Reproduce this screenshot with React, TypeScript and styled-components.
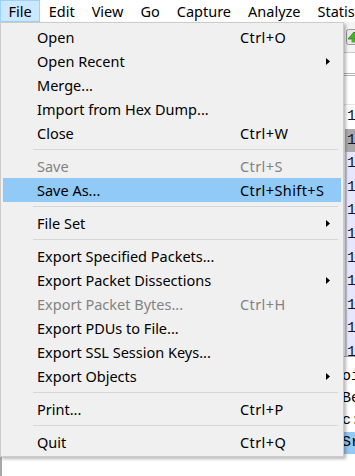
import React from "react";
import styled, { createGlobalStyle } from "styled-components";

type Entry =
    | { kind: "sep" }
    | { kind: "item"; label: string; shortcut?: string; submenu?: boolean; disabled?: boolean; active?: boolean };

const fileMenu: Entry[] = [
    { kind: "item", label: "Open", shortcut: "Ctrl+O" },
    { kind: "item", label: "Open Recent", submenu: true },
    { kind: "item", label: "Merge..." },
    { kind: "item", label: "Import from Hex Dump..." },
    { kind: "item", label: "Close", shortcut: "Ctrl+W" },
    { kind: "sep" },
    { kind: "item", label: "Save", shortcut: "Ctrl+S", disabled: true },
    { kind: "item", label: "Save As...", shortcut: "Ctrl+Shift+S", active: true },
    { kind: "sep" },
    { kind: "item", label: "File Set", submenu: true },
    { kind: "sep" },
    { kind: "item", label: "Export Specified Packets..." },
    { kind: "item", label: "Export Packet Dissections", submenu: true },
    { kind: "item", label: "Export Packet Bytes...", shortcut: "Ctrl+H", disabled: true },
    { kind: "item", label: "Export PDUs to File..." },
    { kind: "item", label: "Export SSL Session Keys..." },
    { kind: "item", label: "Export Objects", submenu: true },
    { kind: "sep" },
    { kind: "item", label: "Print...", shortcut: "Ctrl+P" },
    { kind: "sep" },
    { kind: "item", label: "Quit", shortcut: "Ctrl+Q" },
];

const menuTitles = ["File", "Edit", "View", "Go", "Capture", "Analyze", "Statistics"];

// packet list rows: first plain, second selected-gray, rest coloured
const packetRows = ["plain", "marked", "tcp", "tcp", "tcp", "tcp", "tcp", "tcp", "tcp", "tcp", "tcp"] as const;

const detailLines = [
    { text: "oint", hl: false },
    { text: "Be", hl: false },
    { text: "c: ", hl: false },
    { text: "Sr", hl: true },
];

function Arrow() {
    return (
        <ArrowIcon width="4" height="7" viewBox="0 0 4 7">
            <path d="M0 0 L4 3.5 L0 7 Z" fill="#000" />
        </ArrowIcon>
    );
}

export default function App() {
    return (
        <>
            <GlobalStyle />
            <Window>
                <MenuBar>
                    {menuTitles.map((t, i) => (
                        <MenuTitle key={t} open={i === 0}>
                            {t}
                        </MenuTitle>
                    ))}
                </MenuBar>
                <Body>
                    <Toolbar>
                        <ToolIcon width="16" height="16" viewBox="0 0 16 16">
                            <rect x="0.5" y="0.5" width="15" height="15" rx="2" fill="#e8e8e8" stroke="#9a9a9a" />
                            <path d="M2 10 L8 3 L14 10 Z" fill="#4caf2a" stroke="#2f7d18" strokeWidth="0.8" />
                            <rect x="5.5" y="10" width="5" height="3.5" fill="#4caf2a" />
                        </ToolIcon>
                    </Toolbar>
                    <FilterBar />
                    <ListHeader />
                    <PacketList>
                        {packetRows.map((kind, i) => (
                            <PacketRow key={i} kind={kind}>
                                1
                            </PacketRow>
                        ))}
                    </PacketList>
                    <Details>
                        {detailLines.map((l, i) => (
                            <DetailRow key={i} hl={l.hl}>
                                {l.text}
                            </DetailRow>
                        ))}
                    </Details>
                </Body>

                <DropMenu>
                    {fileMenu.map((e, i) =>
                        e.kind === "sep" ? (
                            <Separator key={i} />
                        ) : (
                            <MenuItem key={i} active={e.active} disabled={e.disabled}>
                                <ItemLabel>{e.label}</ItemLabel>
                                <Shortcut>{e.shortcut}</Shortcut>
                                <ArrowSlot>{e.submenu && <Arrow />}</ArrowSlot>
                            </MenuItem>
                        )
                    )}
                </DropMenu>
            </Window>
        </>
    );
}

const GlobalStyle = createGlobalStyle`
    html, body {
        margin: 0;
        background: #ffffff;
    }
    body {
        font-family: "Noto Sans", "Open Sans", sans-serif;
        font-size: 14px;
        color: #000;
    }
`;

const Window = styled.div`
    position: relative;
    width: 355px;
    height: 476px;
    overflow: hidden;
    display: flex;
    flex-direction: column;
    background: #fff;
`;

const MenuBar = styled.div`
    display: flex;
    height: 22px;
    background: #fff;
    font-size: 14.5px;
`;

const MenuTitle = styled.div<{ open?: boolean }>`
    box-sizing: border-box;
    height: 22px;
    padding: 0 7.5px;
    line-height: 20px;
    white-space: nowrap;
    border: 1px solid ${(p) => (p.open ? "#99d1ff" : "transparent")};
    background: ${(p) => (p.open ? "#cce8ff" : "transparent")};
`;

const Body = styled.div`
    flex: 1;
    display: flex;
    flex-direction: column;
    border-left: 2px solid #a8a8a8;
`;

const Toolbar = styled.div`
    height: 31px;
    box-sizing: border-box;
    display: flex;
    align-items: center;
    padding-left: 344px;
    border-bottom: 1px solid #c8c8c8;
    background: #f4f4f4;
`;

const ToolIcon = styled.svg`
    flex: none;
`;

const FilterBar = styled.div`
    height: 20px;
    border-bottom: 3px double #b4b4b4;
    background: #fff;
`;

const ListHeader = styled.div`
    height: 28px;
    background: #fff;
    border-bottom: 1px solid #e6e6e6;
`;

const PacketList = styled.div`
    display: flex;
    flex-direction: column;
    height: 251px;
    overflow: hidden;
    border-bottom: 1px solid #a0a0a0;
`;

const rowBg = {
    plain: "#ffffff",
    marked: "#a9a9a9",
    tcp: "#e7e6ff",
};

const PacketRow = styled.div<{ kind: keyof typeof rowBg }>`
    flex: none;
    height: 23.6px;
    line-height: 23.6px;
    padding-left: 345px;
    font-family: "Liberation Mono", "DejaVu Sans Mono", monospace;
    font-size: 15px;
    color: #12122a;
    background: ${(p) => rowBg[p.kind]};
    box-shadow: inset 343px 0 0 #ffffff, inset 345px 0 0 ${(p) => (p.kind === "tcp" ? "#c9c6de" : "transparent")};
`;

const Details = styled.div`
    padding-top: 9px;
    display: flex;
    flex-direction: column;
`;

const DetailRow = styled.div<{ hl?: boolean }>`
    height: 22px;
    line-height: 22px;
    padding-left: 340px;
    white-space: nowrap;
    font-family: "Liberation Mono", "DejaVu Sans Mono", monospace;
    font-size: 15px;
    background: ${(p) => (p.hl ? "#91c9f7" : "transparent")};
`;

const DropMenu = styled.div`
    position: absolute;
    top: 22px;
    left: 0;
    width: 344px;
    box-sizing: border-box;
    padding: 2px;
    background: #f0f0f0;
    border: 1px solid #cccccc;
    box-shadow: 2px 2px 3px rgba(0, 0, 0, 0.28);
    display: flex;
    flex-direction: column;
    font-size: 14.5px;
`;

const MenuItem = styled.div<{ active?: boolean; disabled?: boolean }>`
    display: flex;
    align-items: center;
    height: 24px;
    padding-left: 34px;
    white-space: nowrap;
    background: ${(p) => (p.active ? "#91c9f7" : "transparent")};
    color: ${(p) => (p.disabled ? "#838383" : "#000")};
`;

const ItemLabel = styled.span`
    flex: 0 0 203px;
`;

const Shortcut = styled.span`
    flex: 1;
    letter-spacing: 0.4px;
`;

const ArrowSlot = styled.span`
    flex: 0 0 4px;
    margin-right: 11px;
    display: flex;
    align-items: center;
`;

const ArrowIcon = styled.svg`
    display: block;
`;

const Separator = styled.div`
    height: 9px;
    margin: 0 3px 0 30px;
    display: flex;
    align-items: center;

    &::after {
        content: "";
        flex: 1;
        height: 1px;
        background: #d7d7d7;
    }
`;
